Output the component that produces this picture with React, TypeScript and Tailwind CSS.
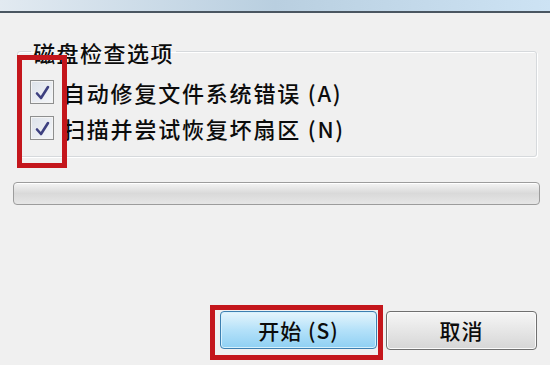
import React from "react";

const font = { fontFamily: '"Noto Sans CJK SC", "Noto Sans", sans-serif' };

function Check() {
  return (
    <div className="w-[24px] h-[24px] border border-[#8e8f8f] bg-gradient-to-br from-[#dde2ea] to-[#f4f6f9] flex items-center justify-center shrink-0 shadow-[inset_0_0_0_1px_#f4f4f4]">
      <svg width="17" height="17" viewBox="0 0 17 17">
        <path d="M3 9.5 L7 14 L14 3" fill="none" stroke="#3d4080" strokeWidth="2.6" strokeLinecap="round" strokeLinejoin="round" />
      </svg>
    </div>
  );
}

export default function App() {
  return (
    <div className="relative w-[550px] h-[365px] bg-[#f0f0f0] overflow-hidden text-[#0c0c0c]" style={font}>
      <div className="h-[11px] bg-gradient-to-r from-[#e2eaf1] via-[#b9cfe0] to-[#cde3f4]" />
      <div className="h-[2px] bg-[#4a5661]" />

      <fieldset className="mt-[25px] ml-[17px] mr-[13px] border border-[#d6d9dc] rounded-[3px] shadow-[inset_1px_1px_0_#ffffff,1px_1px_0_#ffffff] pt-[9px] pb-[10px]">
        <legend className="ml-[13px] px-[2px] h-[27px] text-[22px] leading-[28px] tracking-[1.5px] font-medium">磁盘检查选项</legend>
        <div className="flex items-center h-[36px] pl-[12px] gap-[9px]">
          <Check />
          <span className="text-[22px] leading-none tracking-[1.8px] font-medium">自动修复文件系统错误 (A)</span>
        </div>
        <div className="flex items-center h-[36px] pl-[12px] gap-[9px]">
          <Check />
          <span className="text-[22px] leading-none tracking-[1.8px] font-medium">扫描并尝试恢复坏扇区 (N)</span>
        </div>
      </fieldset>

      <div className="mt-[25px] ml-[13px] mr-[10px] h-[23px] rounded-[4px] border border-[#9c9c9c] bg-gradient-to-b from-[#f4f4f4] via-[#d9d9d9] to-[#e6e6e6] shadow-[inset_0_1px_0_#ffffff]" />

      <div className="mt-[106px] flex justify-end gap-[9px] pr-[13px]">
        <div className="relative">
          <button className="w-[157px] h-[38px] rounded-[4px] border border-[#3c7fb1] bg-gradient-to-b from-[#e5f5fc] via-[#b4e1f9] to-[#8fd0f3] text-[21px] leading-none tracking-[1px] font-medium shadow-[inset_0_0_0_1px_#d6f1fd]" style={font}>
            开始 (S)
          </button>
          <div className="absolute -left-[10px] -top-[6px] -right-[6px] -bottom-[10px] border-[5px] border-[#c4161c]" />
        </div>
        <button className="w-[151px] h-[39px] rounded-[4px] border border-[#707070] bg-gradient-to-b from-[#f6f6f6] via-[#e6e6e6] to-[#d6d6d6] text-[21px] leading-none tracking-[1px] font-medium shadow-[inset_0_0_0_1px_#fbfbfb]" style={font}>
          取消
        </button>
      </div>

      <div className="absolute left-[17px] top-[55px] w-[50px] h-[113px] border-[5px] border-[#c4161c]" />
    </div>
  );
}
